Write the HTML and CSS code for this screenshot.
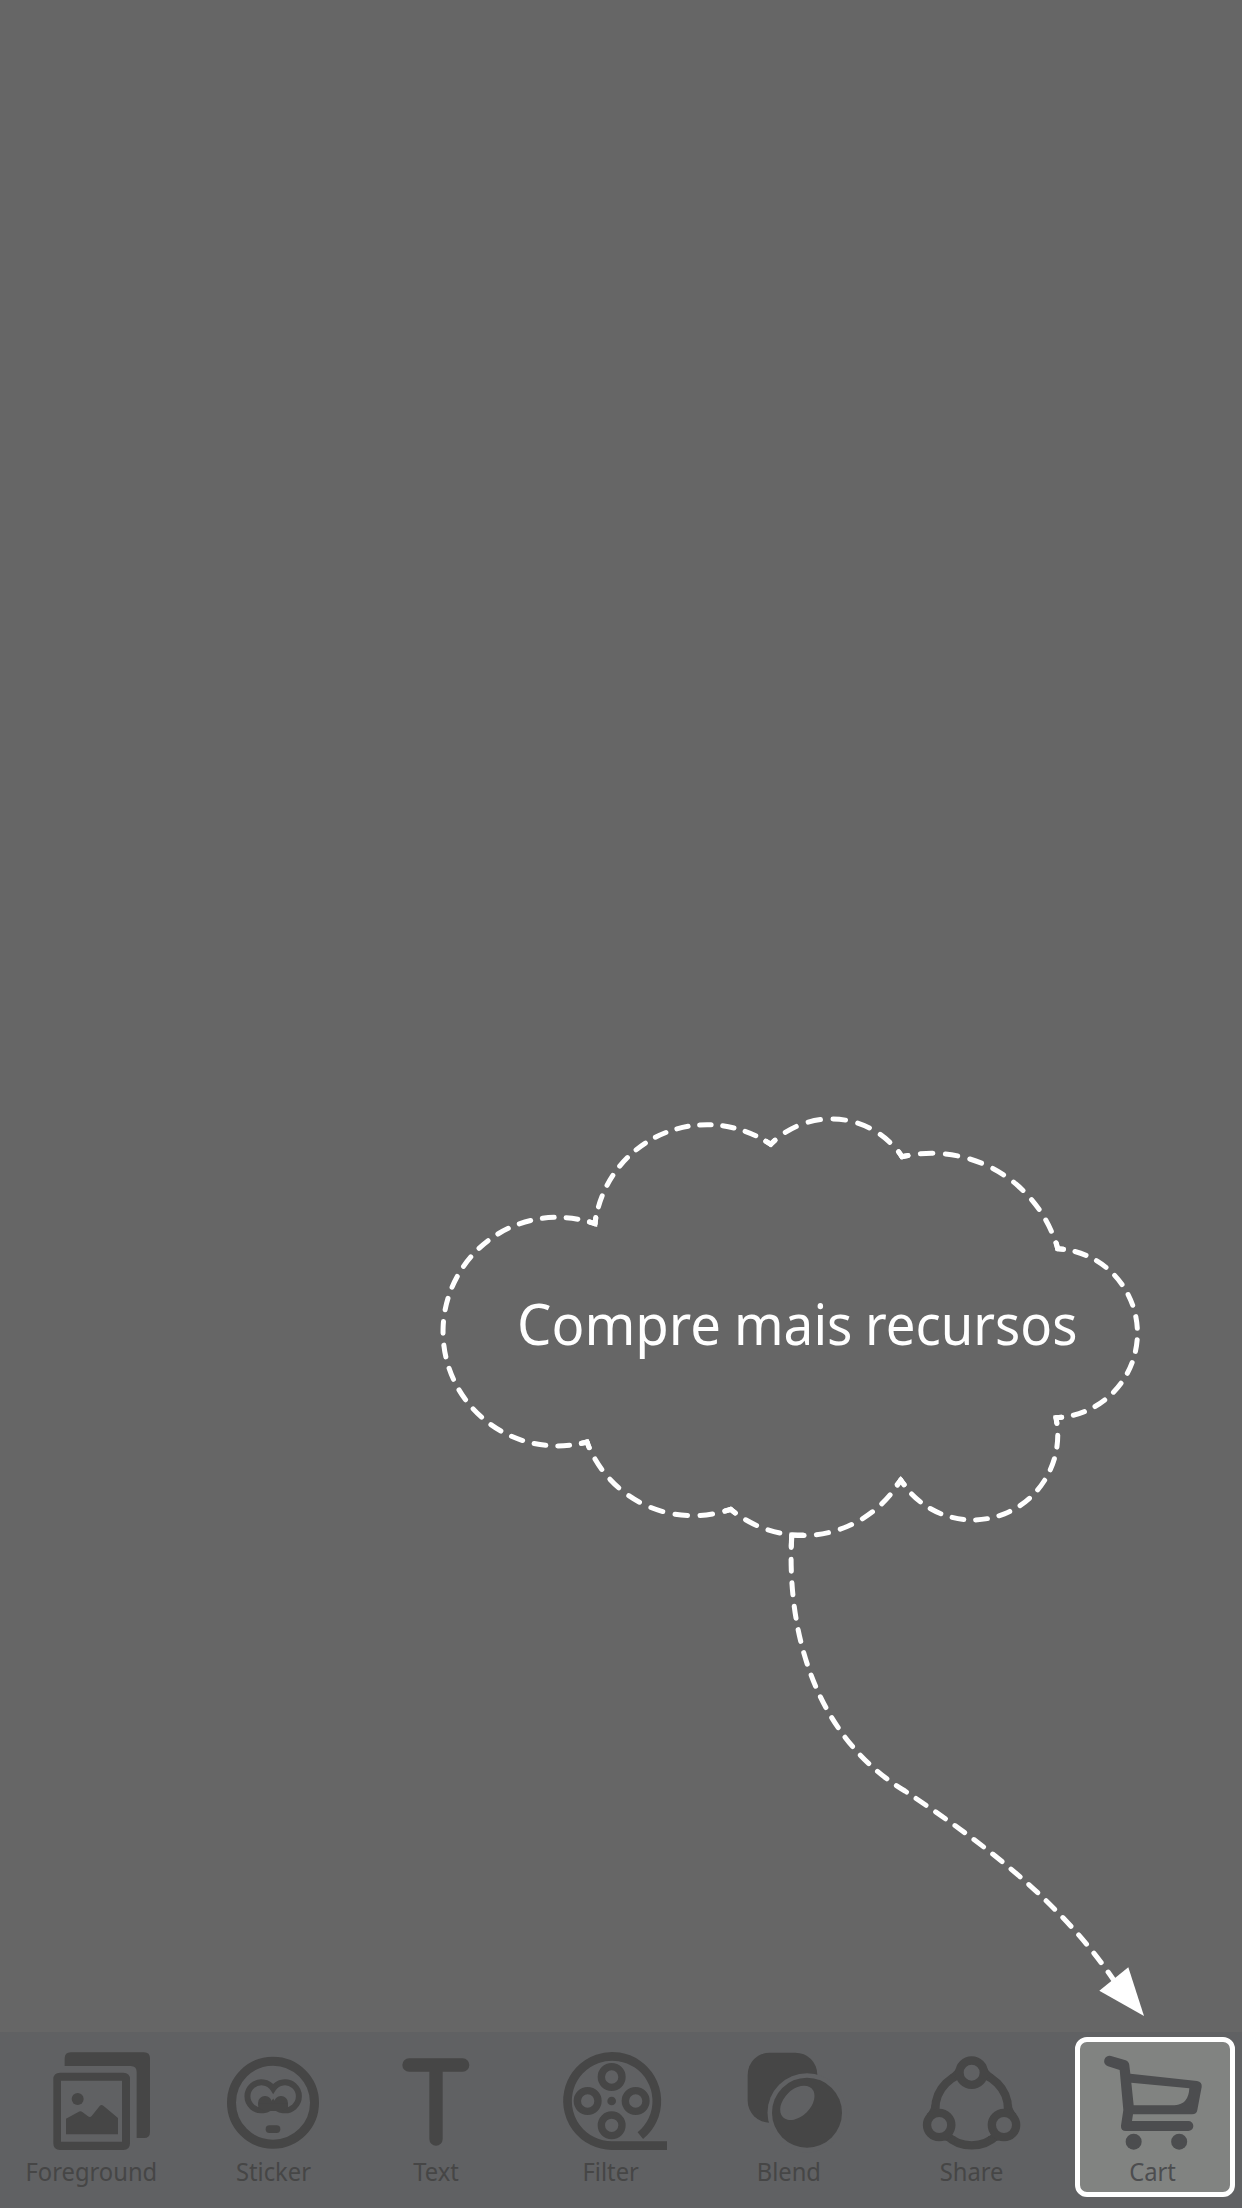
FILE: index.html
```html
<!DOCTYPE html>
<html lang="pt">
<head>
<meta charset="utf-8">
<title>Compre mais recursos</title>
<link rel="stylesheet" href="styles.css">
</head>
<body>
<main class="stage">
  <svg class="callout" viewBox="0 0 1242 2032">
    <!-- cloud outline: one arc per lobe, dashes evenly fitted to each -->
    <g class="dashed">
      <path pathLength="432" d="M595 1223.7A114.3 114.3 0 1 0 587 1442"/>
      <path pathLength="168" d="M587 1442A113.3 113.3 0 0 0 730.7 1509.3"/>
      <path pathLength="192" d="M730.7 1509.3A113.5 113.5 0 0 0 900.7 1480"/>
      <path pathLength="240" d="M900.7 1480A85 85 0 0 0 1056 1417.7"/>
      <path pathLength="264" d="M1056 1417.7A84.6 84.6 0 0 0 1057.7 1248.7"/>
      <path pathLength="192" d="M1057.7 1248.7A131 131 0 0 0 902 1156.7"/>
      <path pathLength="144" d="M902 1156.7A85 85 0 0 0 770.7 1144.3"/>
      <path pathLength="240" d="M770.7 1144.3A113 113 0 0 0 595 1223.7"/>
    </g>
    <path class="corner" d="M589.5 1222L595 1223.7L595.7 1217.5M581.5 1443.3L587 1442L589 1447.5M725 1511L730.7 1509.3L735.2 1513M897.2 1484.5L900.7 1480L904.2 1484.5M1056.7 1423L1056 1417.7L1061.5 1417.3M1056.3 1243L1057.7 1248.7L1063.5 1249.2M898.8 1151.8L902 1156.7L908 1155.6M774.8 1140.4L770.7 1144.3L765.8 1141.3"/>
    <path class="corner" d="M791.3 1546L791.9 1535H803"/>
    <path class="tail" d="M791.7 1535C786 1640 820 1740 905 1791C975 1838 1055 1895 1113 1979"/>
    <path class="head" d="M1099.3 1990.7L1128.3 1967.3L1144 2016Z"/>
    <text class="message" y="1345.3"><tspan x="517" textLength="204" lengthAdjust="spacingAndGlyphs">Compre</tspan> <tspan x="734" textLength="118.5" lengthAdjust="spacingAndGlyphs">mais</tspan> <tspan x="865" textLength="212.5" lengthAdjust="spacingAndGlyphs">recursos</tspan></text>
  </svg>
</main>
<nav class="toolbar">
  <div class="item foreground">
    <svg class="icon" viewBox="96 66 360 336">
      <path d="M194 138V115Q194 97 212 97H432Q450 97 450 115V336Q450 354 432 354H410V156Q410 138 392 138Z"/>
      <path fill-rule="evenodd" d="M180 158H370Q390 158 390 178V370Q390 390 370 390H180Q160 390 160 370V178Q160 158 180 158ZM183 182V365H366V182Z"/>
      <circle cx="233" cy="237" r="18"/>
      <path d="M198 343V296L235 276Q241 272 247 276L264 289Q270 294 275 288L299 258Q304 252 310 257L354 294V343Z"/>
    </svg>
    <span class="label">Foreground</span>
  </div>
  <div class="item">
    <svg class="icon" viewBox="639 66 360 336">
      <circle class="line" cx="819" cy="248" r="124.5" stroke-width="27"/>
      <path class="line" stroke-width="18" d="M819.500 206A42 42 0 1 0 819.500 252A42 42 0 1 0 819.500 206Z"/>
      <circle cx="795" cy="249" r="21"/><circle cx="843" cy="249" r="21"/>
      <path d="M775 250V264L793 273H846L864 264V250Z"/>
      <rect x="797" y="316" width="44" height="23" rx="11"/>
    </svg>
    <span class="label">Sticker</span>
  </div>
  <div class="item">
    <svg class="icon" viewBox="78 66 360 336">
      <path class="line round" stroke-width="40" d="M177 135H338M258 135V357"/>
    </svg>
    <span class="label">Text</span>
  </div>
  <div class="item">
    <svg class="icon" viewBox="603 66 360 336">
      <path class="line" stroke-width="26" d="M871 347A134 134 0 1 0 785 377H951"/>
      <g class="line" stroke-width="22">
        <circle cx="785" cy="171" r="31"/><circle cx="785" cy="316" r="31"/>
        <circle cx="713" cy="243" r="31"/><circle cx="857" cy="243" r="31"/>
      </g>
      <circle cx="785" cy="243" r="13"/>
    </svg>
    <span class="label">Filter</span>
  </div>
  <div class="item">
    <svg class="icon" viewBox="87 66 360 336">
      <rect x="143" y="98" width="209" height="210" rx="66"/>
      <circle class="hole" cx="321" cy="278" r="118.500"/>
      <circle cx="321" cy="278" r="105"/>
      <ellipse class="hole" cx="292" cy="248.500" rx="61" ry="40" transform="rotate(-45 292 248.500)"/>
    </svg>
    <span class="label">Blend</span>
  </div>
  <div class="item">
    <svg class="icon" viewBox="636 66 360 336">
      <circle class="line" cx="815" cy="267" r="109" stroke-width="25"/>
      <path d="M768 145Q766 154 750 164L778 180ZM862 145Q864 154 880 164L852 180ZM694 252Q695 268 680 283L708 290ZM936 252Q935 268 950 283L922 290ZM728 362Q742 359 762 372L766 348ZM902 362Q888 359 868 372L864 348Z"/>
      <g class="node" stroke-width="25">
        <circle cx="815" cy="158" r="36.500"/><circle cx="717.500" cy="315" r="36.500"/><circle cx="912" cy="315" r="36.500"/>
      </g>
    </svg>
    <span class="label">Share</span>
  </div>
  <div class="item cart">
    <svg class="icon" viewBox="159 66 360 336">
      <path fill-rule="evenodd" d="M213 108L257 121Q267 125 268 136L271 161L471 183Q487 186 485 201L472 270Q470 283 456 283H279L276 303H445A15 15 0 0 1 445 333H258Q242 333 243 317L250 270L239 150L204 139A16 16 0 0 1 213 108ZM274 188L281 256H404Q446 253 448 205Z"/>
      <circle cx="281" cy="365" r="24"/><circle cx="417.500" cy="365" r="24"/>
    </svg>
    <span class="label">Cart</span>
  </div>
</nav>
</body>
</html>
```
FILE: styles.css
```css
body {
  margin: 0;
  width: 1242px;
  height: 2208px;
  display: flex;
  flex-direction: column;
  background: #666666;
  font-family: "Noto Sans", "Open Sans", sans-serif;
}

.stage {
  flex: 1;
  min-height: 0;
}

.callout {
  display: block;
  width: 1242px;
  height: 2032px;
}

.dashed,
.tail,
.corner {
  fill: none;
  stroke: #ffffff;
  stroke-width: 5;
  stroke-linecap: round;
  stroke-linejoin: miter;
}

.dashed {
  stroke-dasharray: 12 12;
  stroke-dashoffset: 6;
}

.tail {
  stroke-dasharray: 12 11.65;
  stroke-dashoffset: -0.5;
}

.head,
.message {
  fill: #ffffff;
}

.message {
  font-size: 57px;
}

.toolbar {
  height: 176px;
  display: grid;
  grid-template-columns: 187px 172px 154px 196px 159px 207px 160px;
  align-items: start;
  background: #606163;
  color: #464646;
}

.item {
  display: flex;
  flex-direction: column;
  align-items: center;
  padding-top: 10px;
}

.foreground {
  padding-right: 4px;
}

.cart {
  box-sizing: border-box;
  height: 160px;
  margin-top: 5px;
  padding: 0 4px 0 0;
  border: 5px solid #ffffff;
  border-radius: 12px;
  background: #818381;
  color: #4c4d4f;
}

.icon {
  display: block;
  width: 120px;
  height: 112px;
  fill: currentColor;
}

.line {
  fill: none;
  stroke: currentColor;
}

.round {
  stroke-linecap: round;
}

.hole {
  fill: #606163;
}

.node {
  fill: #606163;
  stroke: currentColor;
}

.label {
  font-size: 25px;
  line-height: 34px;
  white-space: nowrap;
  transform: scaleX(0.95);
}
```
